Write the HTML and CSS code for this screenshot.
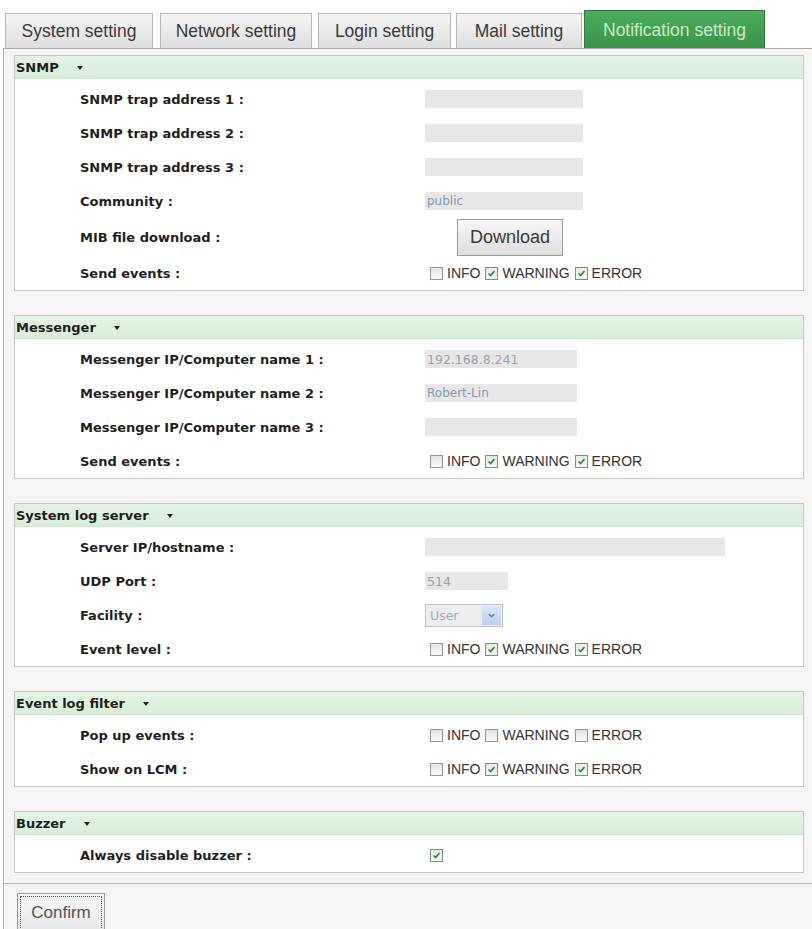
FILE: index.html
```html
<!DOCTYPE html>
<html lang="en">
<head>
<meta charset="utf-8">
<title>Notification setting</title>
<link rel="stylesheet" href="styles.css">
</head>
<body>
<div class="tabs">
  <div class="tab t1">System setting</div>
  <div class="tab t2">Network setting</div>
  <div class="tab t3">Login setting</div>
  <div class="tab t4">Mail setting</div>
  <div class="tab t5 active">Notification setting</div>
</div>
<div class="panel">
  <div class="groups">
    <section class="group">
      <div class="group-head">SNMP<span class="caret"></span></div>
      <div class="group-body">
        <div class="row"><span class="label">SNMP trap address 1 :</span><input class="field w158" type="text" value="" readonly></div>
        <div class="row"><span class="label">SNMP trap address 2 :</span><input class="field w158" type="text" value="" readonly></div>
        <div class="row"><span class="label">SNMP trap address 3 :</span><input class="field w158" type="text" value="" readonly></div>
        <div class="row"><span class="label">Community :</span><input class="field w158 light" type="text" value="public" readonly></div>
        <div class="row tall"><span class="label">MIB file download :</span><div><button class="btn download">Download</button></div></div>
        <div class="row"><span class="label">Send events :</span>
          <div class="checks">
            <span class="cb"></span><span class="ct">INFO</span>
            <span class="cb on"><svg viewBox="0 0 13 13"><polyline points="3,6.5 5.5,9 10,3.5"/></svg></span><span class="ct">WARNING</span>
            <span class="cb on"><svg viewBox="0 0 13 13"><polyline points="3,6.5 5.5,9 10,3.5"/></svg></span><span class="ct">ERROR</span>
          </div>
        </div>
      </div>
    </section>

    <section class="group">
      <div class="group-head">Messenger<span class="caret"></span></div>
      <div class="group-body">
        <div class="row"><span class="label">Messenger IP/Computer name 1 :</span><input class="field w152" type="text" value="192.168.8.241" readonly></div>
        <div class="row"><span class="label">Messenger IP/Computer name 2 :</span><input class="field w152 blue" type="text" value="Robert-Lin" readonly></div>
        <div class="row"><span class="label">Messenger IP/Computer name 3 :</span><input class="field w152" type="text" value="" readonly></div>
        <div class="row"><span class="label">Send events :</span>
          <div class="checks">
            <span class="cb"></span><span class="ct">INFO</span>
            <span class="cb on"><svg viewBox="0 0 13 13"><polyline points="3,6.5 5.5,9 10,3.5"/></svg></span><span class="ct">WARNING</span>
            <span class="cb on"><svg viewBox="0 0 13 13"><polyline points="3,6.5 5.5,9 10,3.5"/></svg></span><span class="ct">ERROR</span>
          </div>
        </div>
      </div>
    </section>

    <section class="group">
      <div class="group-head">System log server<span class="caret"></span></div>
      <div class="group-body">
        <div class="row"><span class="label">Server IP/hostname :</span><input class="field w300" type="text" value="" readonly></div>
        <div class="row"><span class="label">UDP Port :</span><input class="field w83" type="text" value="514" readonly></div>
        <div class="row"><span class="label">Facility :</span>
          <div class="select"><span class="sel-text">User</span><span class="sel-btn"><svg viewBox="0 0 10 8"><polyline points="2,2.5 5,5.5 8,2.5"/></svg></span></div>
        </div>
        <div class="row"><span class="label">Event level :</span>
          <div class="checks">
            <span class="cb"></span><span class="ct">INFO</span>
            <span class="cb on"><svg viewBox="0 0 13 13"><polyline points="3,6.5 5.5,9 10,3.5"/></svg></span><span class="ct">WARNING</span>
            <span class="cb on"><svg viewBox="0 0 13 13"><polyline points="3,6.5 5.5,9 10,3.5"/></svg></span><span class="ct">ERROR</span>
          </div>
        </div>
      </div>
    </section>

    <section class="group">
      <div class="group-head">Event log filter<span class="caret"></span></div>
      <div class="group-body">
        <div class="row"><span class="label">Pop up events :</span>
          <div class="checks">
            <span class="cb"></span><span class="ct">INFO</span>
            <span class="cb"></span><span class="ct">WARNING</span>
            <span class="cb"></span><span class="ct">ERROR</span>
          </div>
        </div>
        <div class="row"><span class="label">Show on LCM :</span>
          <div class="checks">
            <span class="cb"></span><span class="ct">INFO</span>
            <span class="cb on"><svg viewBox="0 0 13 13"><polyline points="3,6.5 5.5,9 10,3.5"/></svg></span><span class="ct">WARNING</span>
            <span class="cb on"><svg viewBox="0 0 13 13"><polyline points="3,6.5 5.5,9 10,3.5"/></svg></span><span class="ct">ERROR</span>
          </div>
        </div>
      </div>
    </section>

    <section class="group last">
      <div class="group-head">Buzzer<span class="caret"></span></div>
      <div class="group-body">
        <div class="row"><span class="label">Always disable buzzer :</span>
          <div class="checks">
            <span class="cb on"><svg viewBox="0 0 13 13"><polyline points="3,6.5 5.5,9 10,3.5"/></svg></span>
          </div>
        </div>
      </div>
    </section>
  </div>
  <div class="actions">
    <button class="btn confirm">Confirm</button>
  </div>
</div>
</body>
</html>
```
FILE: styles.css
```css
html, body {
  margin: 0;
  padding: 0;
}
body {
  background: #ffffff;
  font-family: "DejaVu Sans", Verdana, sans-serif;
  overflow: hidden;
}

/* Tabs */
.tabs {
  display: flex;
  align-items: flex-end;
  height: 38px;
  padding: 10px 0 0 5px;
}
.tab {
  box-sizing: border-box;
  height: 35px;
  border: 1px solid #b9b9b9;
  border-bottom: none;
  background: linear-gradient(#f5f5f5, #dedede);
  font-family: "Liberation Sans", Arial, sans-serif;
  font-size: 17.5px;
  color: #3a3a3a;
  display: flex;
  align-items: center;
  justify-content: center;
  padding-top: 1px;
}
.t1 { width: 148px; }
.t2 { width: 152px; margin-left: 7px; }
.t3 { width: 133px; margin-left: 6px; }
.t4 { width: 126px; margin-left: 5px; }
.t5 { width: 181px; margin-left: 2px; }
.tab.active {
  height: 38px;
  background: linear-gradient(#4dab5c, #3b934a);
  border-color: #2f7a3c;
  color: #c9eec6;
}

/* Panel */
.panel {
  margin-left: 3px;
  border-top: 1px solid #a8a8a8;
  border-left: 1px solid #b2b2b2;
  background: #f5f5f5;
  height: 900px;
}
.groups {
  padding: 6px 8px 0 10px;
}
.group {
  border: 1px solid #c6c6c6;
  background: #ffffff;
  margin-bottom: 24px;
}
.group.last {
  margin-bottom: 10px;
}
.group-head {
  box-sizing: border-box;
  height: 23px;
  background: linear-gradient(#e3f3e3, #d8eed8);
  border-bottom: 1px solid #cfe2cf;
  display: flex;
  align-items: center;
  padding-left: 1px;
  font-weight: bold;
  font-size: 13px;
  color: #1e1e1e;
}
.caret {
  width: 0;
  height: 0;
  border-left: 3.5px solid transparent;
  border-right: 3.5px solid transparent;
  border-top: 4px solid #222;
  margin-left: 18px;
  margin-top: 2px;
}
.group-body {
  padding-top: 3px;
}
.row {
  display: grid;
  grid-template-columns: 410px 1fr;
  align-items: center;
  height: 34px;
}
.row.tall {
  height: 38px;
}
.label {
  padding-left: 65px;
  font-weight: bold;
  font-size: 13px;
  color: #1f1f1f;
}

/* Fields */
.field {
  box-sizing: border-box;
  height: 18px;
  border: none;
  outline: none;
  background: #e7e7e7;
  padding: 0 2px;
  margin: 0;
  font-family: "DejaVu Sans", Verdana, sans-serif;
  font-size: 12.5px;
  color: #9aa2ac;
}
.field.light,
.field.blue {
  color: #8795b0;
  font-size: 12px;
}
.w158 { width: 158px; }
.w152 { width: 152px; }
.w300 { width: 300px; }
.w83 { width: 83px; }

/* Select */
.select {
  box-sizing: border-box;
  width: 78px;
  height: 23px;
  border: 1px solid #b9c0ca;
  background: #eeeeee;
  display: flex;
  align-items: center;
  justify-content: space-between;
  padding: 0 1px 0 4px;
}
.sel-text {
  font-size: 12.5px;
  color: #a4abb4;
}
.sel-btn {
  width: 19px;
  height: 19px;
  background: linear-gradient(#dde7f7, #bccfee);
  display: flex;
  align-items: center;
  justify-content: center;
}
.sel-btn svg {
  width: 9px;
  height: 7px;
  fill: none;
  stroke: #5a78b0;
  stroke-width: 1.6;
}

/* Checkboxes */
.checks {
  display: flex;
  align-items: center;
  padding-left: 5px;
  font-family: "Liberation Sans", Arial, sans-serif;
  font-size: 14px;
  color: #333333;
}
.cb {
  box-sizing: border-box;
  width: 13px;
  height: 13px;
  border: 1px solid #8c98a4;
  background: linear-gradient(#dfe4e9, #f9f9f9);
  margin-right: 4px;
  display: flex;
  align-items: center;
  justify-content: center;
}
.cb.on {
  background: linear-gradient(#e2eee2, #f4f9f4);
  border-color: #7a8c90;
}
.cb svg {
  width: 11px;
  height: 11px;
  fill: none;
  stroke: #2f8a3c;
  stroke-width: 2;
}
.ct {
  margin-right: 5px;
}

/* Buttons */
.btn {
  font-family: "Liberation Sans", Arial, sans-serif;
  border: 1px solid #9c9c9c;
  background: linear-gradient(#f7f7f7, #dedede);
  color: #3a3a3a;
  padding: 0;
  margin: 0;
}
.download {
  width: 106px;
  height: 37px;
  margin-left: 32px;
  font-size: 18px;
}
.actions {
  border-top: 1px solid #b6b6b6;
  padding: 9px 0 0 13px;
}
.confirm {
  width: 88px;
  height: 40px;
  font-size: 17px;
  color: #555555;
  background: linear-gradient(#f8f8f8, #e6e6e6);
  outline: 1px dotted #5a5a5a;
  outline-offset: -4px;
}
```
